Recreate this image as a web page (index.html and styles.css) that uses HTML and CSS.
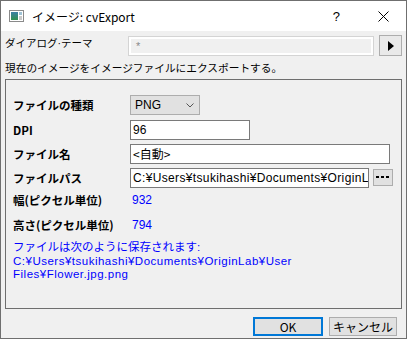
FILE: index.html
```html
<!DOCTYPE html>
<html>
<head>
    <meta charset="utf-8">
    <title>イメージ: cvExport</title>
    <link rel="stylesheet" href="styles.css">
</head>
<body>
    <div class="window">
        <div class="titlebar">
            <svg class="app-icon" width="15" height="12" viewBox="0 0 15 12">
                <defs>
                    <linearGradient id="pic" x1="0" y1="0" x2="0" y2="1">
                        <stop offset="0" stop-color="#3b7fa6"/>
                        <stop offset="1" stop-color="#2f8f4e"/>
                    </linearGradient>
                </defs>
                <rect x="0.5" y="0.5" width="14" height="11" fill="#ffffff" stroke="#8a8a8a"/>
                <rect x="2" y="2" width="7" height="8" fill="url(#pic)"/>
                <rect x="10" y="2" width="3" height="3" fill="#9fc3d6"/>
                <rect x="10" y="6" width="3" height="4" fill="#c9c9c9"/>
            </svg>
            <span class="title">イメージ: cvExport</span>
            <span class="help">?</span>
            <svg class="close" width="11" height="11" viewBox="0 0 11 11">
                <path d="M0.5 0.5 L10.5 10.5 M10.5 0.5 L0.5 10.5" stroke="#000" stroke-width="1"/>
            </svg>
        </div>
        <div class="content">
            <div class="theme-row">
                <span class="theme-label">ダイアログ·テーマ</span>
                <div class="theme-field">*</div>
                <button class="arrow-btn">
                    <svg width="8" height="10" viewBox="0 0 8 10"><path d="M1 0 L7 5 L1 10 Z" fill="#000"/></svg>
                </button>
            </div>
            <p class="desc">現在のイメージをイメージファイルにエクスポートする。</p>
            <div class="group">
                <div class="form">
                    <div class="label row-a">ファイルの種類</div>
                    <div class="field row-a">
                        <div class="select">PNG
                            <svg class="chevron" width="8" height="5" viewBox="0 0 8 5"><path d="M0.5 0.5 L4 4 L7.5 0.5" fill="none" stroke="#555"/></svg>
                        </div>
                    </div>
                    <div class="label row-a">DPI</div>
                    <div class="field row-a"><div class="input input-dpi">96</div></div>
                    <div class="label row-b">ファイル名</div>
                    <div class="field row-b"><div class="input input-name">&lt;自動&gt;</div></div>
                    <div class="label row-b">ファイルパス</div>
                    <div class="field row-b">
                        <div class="input input-path">C:¥Users¥tsukihashi¥Documents¥OriginL</div>
                        <button class="browse-btn">
                            <svg width="14" height="3" viewBox="0 0 14 3">
                                <rect x="0" y="0" width="3" height="2" fill="#000"/>
                                <rect x="5" y="0" width="3" height="2" fill="#000"/>
                                <rect x="10" y="0" width="3" height="2" fill="#000"/>
                            </svg>
                        </button>
                    </div>
                    <div class="label row-c">幅(ピクセル単位)</div>
                    <div class="value row-c">932</div>
                    <div class="label row-d">高さ(ピクセル単位)</div>
                    <div class="value row-d">794</div>
                </div>
                <p class="note">ファイルは次のように保存されます:<br><span class="path">C:¥Users¥tsukihashi¥Documents¥OriginLab¥User Files¥Flower.jpg.png</span></p>
            </div>
            <div class="buttons">
                <button class="btn btn-default">OK</button>
                <button class="btn">キャンセル</button>
            </div>
        </div>
    </div>
</body>
</html>
```

FILE: styles.css
```css
body
{
    margin: 0;
    font-family: "Liberation Sans", "Noto Sans CJK JP", sans-serif;
    font-size: 11px;
    color: #000;
    background: #f0f0f0;
}
.window
{
    width: 407px;
    height: 339px;
    box-sizing: border-box;
    border: 1px solid #6f6f6f;
    background: #f0f0f0;
    overflow: hidden;
}
.titlebar
{
    display: flex;
    align-items: center;
    height: 30px;
    background: #ffffff;
}
.app-icon
{
    margin-left: 8px;
    margin-right: 8px;
}
.title
{
    flex: 1;
    font-size: 12px;
    font-family: "Noto Sans CJK JP", "Liberation Sans", sans-serif;
}
.help
{
    font-size: 13px;
    margin-right: 38px;
}
.close
{
    margin-right: 17px;
}
.content
{
    padding: 4px 0 0 4px;
}
.theme-row
{
    display: flex;
    align-items: flex-start;
}
.theme-label
{
    width: 123px;
    line-height: 14px;
    padding-top: 1px;
    font-size: 10.5px;
}
.theme-field
{
    width: 246px;
    height: 20px;
    margin-top: 1px;
    box-sizing: border-box;
    border: 1px solid #d4d4d4;
    box-shadow: inset 0 0 0 2px #ffffff;
    padding: 2px 0 0 7px;
    color: #8a8a8a;
    line-height: 15px;
}
.arrow-btn
{
    width: 23px;
    height: 21px;
    margin-left: 5px;
    padding: 0;
    box-sizing: border-box;
    border: 1px solid #adadad;
    background: #e9e9e9;
    display: flex;
    align-items: center;
    justify-content: center;
}
.desc
{
    margin: 5px 0 0 0;
    line-height: 14px;
    font-size: 10.7px;
    font-family: "Noto Sans CJK JP", sans-serif;
}
.group
{
    width: 397px;
    height: 230px;
    margin-top: 4px;
    box-sizing: border-box;
    border: 1px solid #6e6e6e;
    padding: 12px 0 0 7px;
}
.form
{
    display: grid;
    grid-template-columns: 117px 1fr;
}
.label
{
    display: flex;
    align-items: center;
    font-weight: bold;
    font-size: 11.5px;
    font-family: "Noto Sans CJK JP", sans-serif;
}
.field, .value
{
    display: flex;
    align-items: center;
}
.row-a { height: 25px; }
.row-b { height: 24px; }
.row-c { height: 20px; }
.row-d { height: 30px; }
.value
{
    padding-left: 2px;
    color: #0000ff;
    font-size: 12px;
}
.select
{
    position: relative;
    width: 70px;
    height: 20px;
    box-sizing: border-box;
    border: 1px solid #adadad;
    background: #e1e1e1;
    padding-left: 4px;
    line-height: 18px;
    font-size: 12px;
}
.chevron
{
    position: absolute;
    right: 5px;
    top: 7px;
}
.input
{
    height: 20px;
    box-sizing: border-box;
    border: 1px solid #7a7a7a;
    background: #ffffff;
    padding-left: 2px;
    line-height: 18px;
    font-size: 12px;
    white-space: nowrap;
    overflow: hidden;
}
.input-dpi { width: 120px; }
.input-name
{
    width: 260px;
    font-family: "Noto Sans CJK JP", sans-serif;
}
.input-path
{
    width: 239px;
    letter-spacing: 0.35px;
}
.browse-btn
{
    width: 20px;
    height: 17px;
    margin-left: 4px;
    margin-bottom: 2px;
    padding: 0;
    box-sizing: border-box;
    border: 1px solid #adadad;
    background: #e1e1e1;
    display: flex;
    align-items: center;
    justify-content: center;
}
.note
{
    width: 320px;
    margin: 1px 0 0 0;
    color: #0000ff;
    font-size: 11.5px;
    line-height: 13.5px;
}
.path
{
    letter-spacing: 0.5px;
}
.buttons
{
    display: flex;
    justify-content: flex-end;
    gap: 6px;
    margin: 8px 9px 0 0;
}
.btn
{
    width: 68px;
    height: 19px;
    padding: 0;
    box-sizing: border-box;
    border: 1px solid #adadad;
    background: #e1e1e1;
    font-family: "Noto Sans CJK JP", "Liberation Sans", sans-serif;
    font-size: 12px;
    line-height: 16px;
    color: #000;
}
.btn-default
{
    width: 70px;
    border: 2px solid #0078d7;
}
```
